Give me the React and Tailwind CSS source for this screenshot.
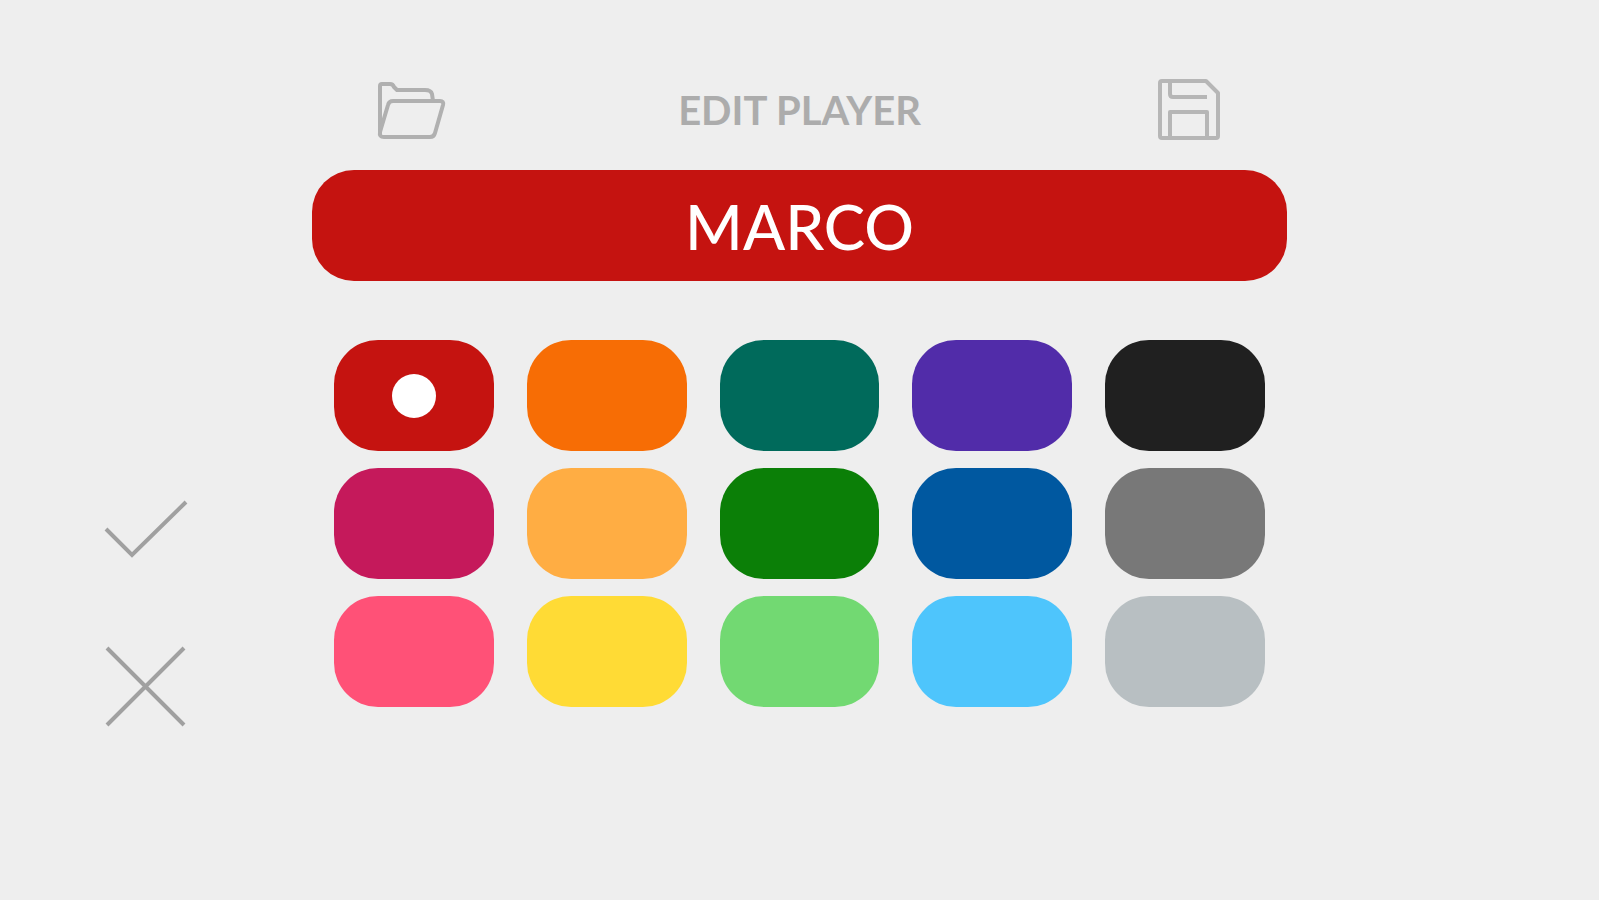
import { useState } from "react";

// Ordered row by row, from dark shades to light ones.
const COLORS = [
  { name: "Red", value: "#c51310", style: "bg-[#c51310]" },
  { name: "Orange", value: "#f76d05", style: "bg-[#f76d05]" },
  { name: "Teal", value: "#006a5b", style: "bg-[#006a5b]" },
  { name: "Purple", value: "#512ca9", style: "bg-[#512ca9]" },
  { name: "Black", value: "#202020", style: "bg-[#202020]" },
  { name: "Magenta", value: "#c5195b", style: "bg-[#c5195b]" },
  { name: "Amber", value: "#ffad43", style: "bg-[#ffad43]" },
  { name: "Green", value: "#0b7f07", style: "bg-[#0b7f07]" },
  { name: "Blue", value: "#0058a0", style: "bg-[#0058a0]" },
  { name: "Gray", value: "#787878", style: "bg-[#787878]" },
  { name: "Pink", value: "#ff5177", style: "bg-[#ff5177]" },
  { name: "Yellow", value: "#ffdb35", style: "bg-[#ffdb35]" },
  { name: "Light green", value: "#72d972", style: "bg-[#72d972]" },
  { name: "Light blue", value: "#4ec5fc", style: "bg-[#4ec5fc]" },
  { name: "Silver", value: "#b8bfc2", style: "bg-[#b8bfc2]" },
];

const FolderIcon = () => (
  <svg viewBox="0 0 70 72" className="w-[70px] h-[72px]" fill="none" stroke="#b0b0b0" strokeWidth="4" strokeLinejoin="round">
    <path d="M3 60V12q0-2 2-2h8q3 0 4 3l3 3h28q6 0 7 4l1 7" />
    <path d="M16 27h47q4 0 3 4l-8 28q-1 4-5 4H7q-5 0-4-5l8-27q1-4 5-4z" />
  </svg>
);

const SaveIcon = () => (
  <svg viewBox="0 0 70 72" className="w-[70px] h-[72px]" fill="none" stroke="#b6b6b6" strokeWidth="4" strokeLinejoin="round">
    <path d="M10 7h44l12 12v43q0 2-2 2H10q-2 0-2-2V9q0-2 2-2z" />
    <path d="M18 7v13q0 3 3 3h34" />
    <path d="M18 64V38h37v26" />
  </svg>
);

const CheckIcon = () => (
  <svg viewBox="0 0 88 64" className="w-[88px] h-16" fill="none" stroke="#a0a0a0" strokeWidth="4">
    <path d="M4 31l26 26L84 4" />
  </svg>
);

const CrossIcon = () => (
  <svg viewBox="0 0 88 88" className="w-[88px] h-[88px]" fill="none" stroke="#a0a0a0" strokeWidth="4">
    <path d="M5 6l77 77M82 6L5 83" />
  </svg>
);

const App = () => {
  const [name, setName] = useState("MARCO");
  const [color, setColor] = useState(COLORS[0]);

  return (
    <div className="min-h-screen bg-[#eeeeee] grid grid-cols-[312px_1fr_312px] font-['Futura','Lato',sans-serif]">
      <aside className="pt-[498px] pl-[102px] flex flex-col items-start gap-20">
        <button type="button" aria-label="Confirm" className="cursor-pointer">
          <CheckIcon />
        </button>
        <button type="button" aria-label="Cancel" className="cursor-pointer">
          <CrossIcon />
        </button>
      </aside>

      <main className="pt-[74px] pb-12">
        <header className="flex items-center justify-between px-[65px] mb-6">
          <button type="button" aria-label="Open player" className="cursor-pointer">
            <FolderIcon />
          </button>
          <h1 className="text-[40px] leading-[72px] font-bold text-[#acacac]">EDIT PLAYER</h1>
          <button type="button" aria-label="Save player" className="cursor-pointer">
            <SaveIcon />
          </button>
        </header>

        <input
          type="text"
          aria-label="Player name"
          value={name}
          onChange={(e) => setName(e.target.value)}
          className={`block w-full h-[111px] rounded-[42px] text-center text-[62px] font-medium text-white outline-none ${color.style}`}
        />

        <div role="radiogroup" aria-label="Player color" className="grid grid-cols-5 gap-x-[33px] gap-y-[17px] mt-[59px] px-[22px]">
          {COLORS.map((item) => (
            <input
              key={item.value}
              type="radio"
              name="color"
              aria-label={item.name}
              value={item.value}
              checked={color.value === item.value}
              onChange={() => setColor(item)}
              className={`appearance-none w-full h-[111px] rounded-[44px] grid place-items-center cursor-pointer checked:before:block checked:before:size-11 checked:before:rounded-full checked:before:bg-white checked:before:content-[''] ${item.style}`}
            />
          ))}
        </div>
      </main>
    </div>
  );
};

export default App;
